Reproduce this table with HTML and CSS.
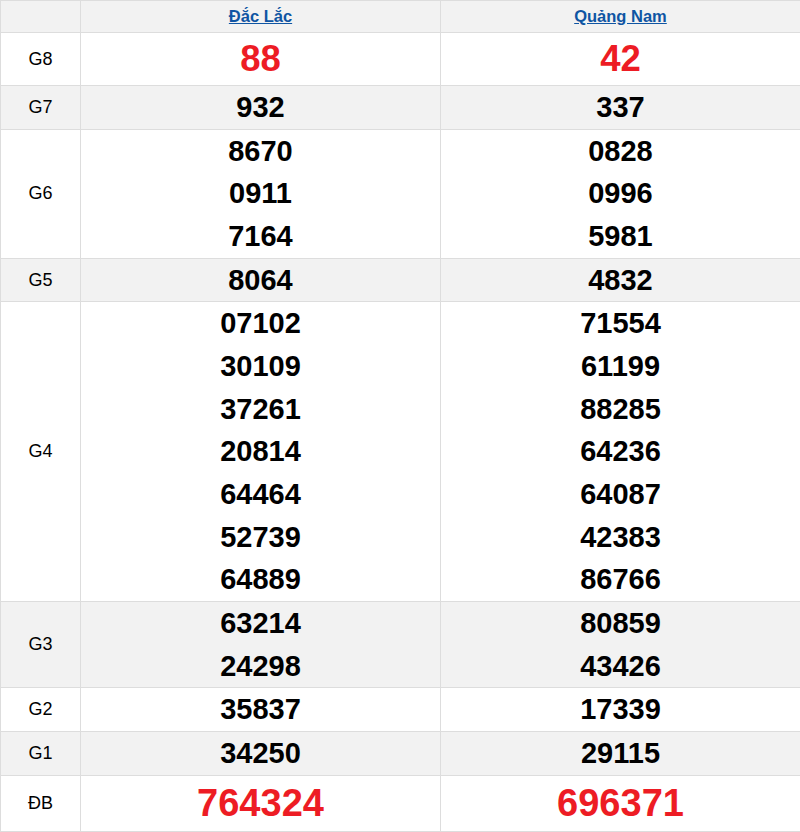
FILE: index.html
```html
<!DOCTYPE html>
<html lang="vi">
<head>
<meta charset="utf-8">
<title>Kết quả xổ số</title>
<link rel="stylesheet" href="styles.css">
</head>
<body>
<table class="kq">
  <colgroup>
    <col class="c-label">
    <col class="c-prov">
    <col class="c-prov">
  </colgroup>
  <thead>
    <tr class="head">
      <th></th>
      <th><a href="#">Đắc Lắc</a></th>
      <th><a href="#">Quảng Nam</a></th>
    </tr>
  </thead>
  <tbody>
    <tr class="r-g8">
      <td class="lbl">G8</td>
      <td><div class="num big">88</div></td>
      <td><div class="num big">42</div></td>
    </tr>
    <tr class="alt">
      <td class="lbl">G7</td>
      <td><div class="num">932</div></td>
      <td><div class="num">337</div></td>
    </tr>
    <tr>
      <td class="lbl">G6</td>
      <td><div class="num">8670</div><div class="num">0911</div><div class="num">7164</div></td>
      <td><div class="num">0828</div><div class="num">0996</div><div class="num">5981</div></td>
    </tr>
    <tr class="alt">
      <td class="lbl">G5</td>
      <td><div class="num">8064</div></td>
      <td><div class="num">4832</div></td>
    </tr>
    <tr>
      <td class="lbl">G4</td>
      <td>
        <div class="num">07102</div><div class="num">30109</div><div class="num">37261</div><div class="num">20814</div><div class="num">64464</div><div class="num">52739</div><div class="num">64889</div>
      </td>
      <td>
        <div class="num">71554</div><div class="num">61199</div><div class="num">88285</div><div class="num">64236</div><div class="num">64087</div><div class="num">42383</div><div class="num">86766</div>
      </td>
    </tr>
    <tr class="alt">
      <td class="lbl">G3</td>
      <td><div class="num">63214</div><div class="num">24298</div></td>
      <td><div class="num">80859</div><div class="num">43426</div></td>
    </tr>
    <tr>
      <td class="lbl">G2</td>
      <td><div class="num">35837</div></td>
      <td><div class="num">17339</div></td>
    </tr>
    <tr class="alt">
      <td class="lbl">G1</td>
      <td><div class="num">34250</div></td>
      <td><div class="num">29115</div></td>
    </tr>
    <tr class="r-db">
      <td class="lbl">ĐB</td>
      <td><div class="num big db">764324</div></td>
      <td><div class="num big db">696371</div></td>
    </tr>
  </tbody>
</table>
</body>
</html>
```

FILE: styles.css
```css
html, body {
  margin: 0;
  padding: 0;
  background: #ffffff;
}

body {
  font-family: "Liberation Sans", Arial, sans-serif;
  color: #000;
}

.kq {
  width: 800px;
  border-collapse: collapse;
  table-layout: fixed;
}

.c-label { width: 80px; }
.c-prov { width: 360px; }

.kq th,
.kq td {
  border: 1px solid #dddddd;
  padding: 0;
  text-align: center;
  vertical-align: middle;
}

.head th {
  height: 31px;
  background: #f2f2f2;
  font-size: 16.5px;
  font-weight: bold;
}

.head a {
  color: #0f55a3;
  text-decoration: underline;
}

.alt td {
  background: #f2f2f2;
}

.lbl {
  font-size: 18px;
  font-weight: normal;
}

.num {
  font-size: 29px;
  font-weight: bold;
  line-height: 42.67px;
}

.num.big {
  color: #ed1c24;
  font-size: 36.5px;
  line-height: 52px;
}

.num.db {
  font-size: 38px;
  line-height: 55px;
}
```
